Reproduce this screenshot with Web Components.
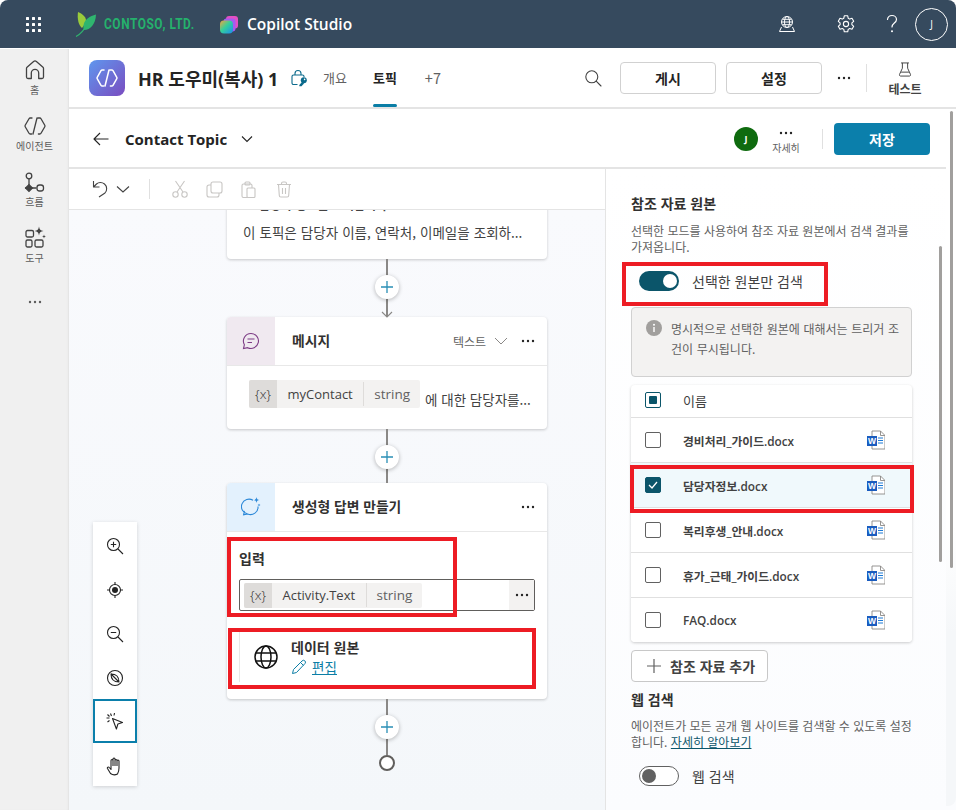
<!DOCTYPE html>
<html lang="ko"><head><meta charset="utf-8"><title>Copilot Studio</title>
<style>
html,body{margin:0;height:100%;overflow:hidden;background:#fff}
body{font-family:"Open Sans","Noto Sans CJK KR",sans-serif;color:#242424;font-size:14px}
</style></head><body>
<app-shell>
  <top-bar></top-bar>
  <side-nav></side-nav>
  <agent-header></agent-header>
  <topic-bar></topic-bar>
  <edit-toolbar></edit-toolbar>
  <flow-canvas></flow-canvas>
  <ref-panel></ref-panel>
  <page-rail></page-rail>
  <red-mark style="left:622px;top:262px;width:206px;height:44px"></red-mark>
  <red-mark style="left:630px;top:465px;width:284px;height:48px"></red-mark>
  <red-mark style="left:227px;top:537px;width:230px;height:80px"></red-mark>
  <red-mark style="left:228px;top:628px;width:308px;height:61px"></red-mark>
</app-shell>
<script>
const FONT='"Open Sans","Noto Sans CJK KR",sans-serif';
const KR='"Noto Sans CJK KR","Open Sans",sans-serif';
function def(name,css,html){
  customElements.define(name,class extends HTMLElement{
    constructor(){super();const s=this.attachShadow({mode:'open'});
      const h=typeof html==='function'?html(this):html;
      s.innerHTML='<style>'+css+'</style>'+h;}
  });
}
const ic=(w,h,vb,body,extra='')=>`<svg width="${w}" height="${h}" viewBox="${vb}" fill="none" ${extra}>${body}</svg>`;
const dots=(c='#242424')=>ic(16,4,'0 0 16 4',`<circle cx="3" cy="2" r="1.2" fill="${c}"/><circle cx="8" cy="2" r="1.2" fill="${c}"/><circle cx="13" cy="2" r="1.2" fill="${c}"/>`);
const agentPath=`<path d="M9 4H7.2a1.4 1.4 0 0 0-1.2.7L2.2 11.3a1.4 1.4 0 0 0 0 1.4L6 19.3a1.4 1.4 0 0 0 1.2.7H8.6M15 4h1.8a1.4 1.4 0 0 1 1.2.7l3.8 6.6a1.4 1.4 0 0 1 0 1.4L18 19.3a1.4 1.4 0 0 1-1.2.7H15.4M14 4l-4 16" stroke-linecap="round" stroke-linejoin="round"/>`;

def('app-shell',`:host{display:grid;position:relative;width:956px;height:810px;overflow:hidden;
  grid-template-columns:69px 537px 1fr;grid-template-rows:49px 60px 60px 41px 1fr;background:#fff}
  ::slotted(top-bar){grid-column:1/-1}
  ::slotted(side-nav){grid-row:2/-1}
  ::slotted(agent-header),::slotted(topic-bar){grid-column:2/-1}
  ::slotted(edit-toolbar){grid-column:2}
  ::slotted(flow-canvas){grid-column:2}
  ::slotted(ref-panel){grid-column:3;grid-row:4/-1}`,`<slot></slot>`);

def('red-mark',`:host{position:absolute;box-sizing:border-box;border:4px solid #ed1c24;pointer-events:none;display:block}`,'');

def('page-rail',`:host{position:absolute;left:946px;top:110px;width:10px;height:696px;background:linear-gradient(#fff 0,#fff 60%,#f5f7f9 75%,#f5f7f9);border-radius:0 0 8px 0;display:block}
  i{position:absolute;left:4px;top:1px;width:3px;height:457px;background:#a19f9d;border-radius:2px}`,`<i></i>`);

def('top-bar',`:host{display:flex;align-items:center;height:48px;background:#364a5e;color:#fff;border-radius:8px 8px 0 0;margin-bottom:1px;position:relative}
  svg{display:block}
  .waffle{margin-left:26px;display:grid;grid-template-columns:repeat(3,3px);gap:3px 3px;width:15px}
  .waffle i{width:3px;height:3px;background:#fff;border-radius:.5px}
  .leaf{margin-left:34px}
  .co{font:700 14.5px Roboto,sans-serif;color:#25b16c;margin-left:7px;letter-spacing:.7px;width:91px;white-space:nowrap;transform:scaleX(.82);transform-origin:left center}
  .cp{margin-left:25px;margin-top:1px}
  .st{margin-left:9px;font-size:15.5px;font-weight:600;white-space:nowrap}
  .r{margin-left:auto;display:flex;align-items:center}
  .av{width:31px;height:31px;border:1px solid #fff;border-radius:50%;display:flex;align-items:center;justify-content:center;font-size:10px;margin:0 8px 0 16px}`,
`<div class="waffle">${'<i></i>'.repeat(9)}</div>
 <span class="leaf">${ic(22,26,'0 0 22 26',`<path d="M3 1c4.500 2 7.500 4.500 8 8 .2 2-1.500 5-4 8C3.500 14 2 8 3 1Z" fill="#9acb3c"/><path d="M21 3.500C14.500 5 10 8.500 8.800 13c-.6 2.400-.5 4.500 0 6 7 0 11.700-6 12.200-15.500Z" fill="#2fb56f"/><path d="M1 25.500c4-2 8-6 11.500-13" stroke="#2fb56f" stroke-width="1.200"/>`)}</span>
 <span class="co">CONTOSO, LTD.</span>
 <span class="cp">${ic(18,18,'0 0 18 18',`<defs><linearGradient id="g1" x1="0" y1="0" x2="1" y2="1"><stop offset="0" stop-color="#f8a23c"/><stop offset=".45" stop-color="#35d09a"/><stop offset="1" stop-color="#1b8cf2"/></linearGradient></defs><rect x="6" y="0" width="12" height="12.500" rx="3" fill="#e24fc4"/><rect x="3.500" y="2.500" width="12" height="13" rx="3" fill="#a35cf0"/><rect x="0" y="4.500" width="13" height="13" rx="4" fill="url(#g1)"/>`)}</span>
 <span class="st">Copilot Studio</span>
 <div class="r">
  ${ic(18,18,'0 0 18 18',`<g stroke="#fff" stroke-width="1"><circle cx="9" cy="7" r="5.500"/><ellipse cx="9" cy="7" rx="2.500" ry="5.500"/><path d="M3.500 7h11M4.500 4.300h9M4.500 9.700h9M3.500 12 1.500 16.500h15L14.500 12"/></g>`)}
  <span style="width:41px"></span>
  ${ic(18,18,'1 1 18 18',`<g stroke="#fff" stroke-width="1.100" stroke-linejoin="round"><path d="M8.300 1.800h3.400l.5 2.400 1.500.9 2.300-.8 1.700 3-1.800 1.600v1.800l1.800 1.600-1.700 3-2.300-.8-1.500.9-.5 2.400H8.300l-.5-2.400-1.500-.9-2.300.8-1.700-3 1.800-1.600V8.900L2.300 7.300l1.700-3 2.300.8 1.500-.9Z"/><circle cx="10" cy="10" r="2.600"/></g>`)}
  <span style="width:30px"></span>
  ${ic(14,20,'0 0 14 20',`<path d="M2.500 5.500C2.800 3 4.800 1.500 7 1.500c2.500 0 4.500 1.700 4.500 4 0 3.500-4.500 3.700-4.500 7.500" stroke="#fff" stroke-width="1.200" stroke-linecap="round"/><circle cx="7" cy="17.300" r="1" fill="#fff"/>`)}
  <div class="av">J</div>
 </div>`);

def('nav-item',`:host{display:flex;flex-direction:column;align-items:center;justify-content:flex-start;height:56px;gap:1px;font-size:10px;color:#5c5c5c;font-family:${KR};line-height:14px;box-sizing:border-box}
  ::slotted(svg){display:block}`,`<slot name="i"></slot><slot></slot>`);
def('side-nav',`:host{display:block;background:#f0f0f0;box-shadow:inset -2px 0 2px -1px #e2e2e2;padding-top:9px;box-sizing:border-box}
  .more{display:flex;justify-content:center;padding-top:18px}`,
`<nav-item><svg slot="i" width="24" height="24" viewBox="0 0 24 24" fill="none" stroke="#424242" stroke-width="1.300" stroke-linejoin="round"><path d="M10.600 3.500a2.200 2.200 0 0 1 2.800 0L20 9.200a1.500 1.500 0 0 1 .5 1.100V19a1.500 1.500 0 0 1-1.500 1.500h-3.300V15a3.700 3.700 0 0 0-7.400 0v5.500H5A1.500 1.500 0 0 1 3.500 19v-8.700a1.500 1.500 0 0 1 .5-1.100Z"/></svg>홈</nav-item>
 <nav-item><svg slot="i" width="24" height="24" viewBox="0 0 24 24" fill="none" stroke="#424242" stroke-width="1.300">${agentPath}</svg>에이전트</nav-item>
 <nav-item><svg slot="i" width="24" height="24" viewBox="0 0 24 24" fill="none" stroke="#424242" stroke-width="1.300"><circle cx="6" cy="6" r="2.800"/><path d="M6 8.800V15M2 18h11.500"/><path d="M6 14.600l3.400 3.400L6 21.400 2.600 18Z" fill="#424242"/><rect x="14" y="15" width="6.500" height="6" rx="2.500"/></svg>흐름</nav-item>
 <nav-item><svg slot="i" width="24" height="24" viewBox="0 0 24 24" fill="none" stroke="#424242" stroke-width="1.300"><rect x="3" y="4.500" width="7.500" height="6.500" rx="1.500"/><rect x="3" y="14" width="6" height="7" rx="1.500"/><rect x="12" y="14" width="8" height="7" rx="1.500"/><path d="M16 .5c.5 3 1.500 4 4.500 4.500-3 .5-4 1.500-4.500 4.500-.5-3-1.500-4-4.500-4.500 3-.5 4-1.500 4.500-4.500ZM21 8.500c.2 1.300.7 1.800 2 2-1.300.2-1.800.7-2 2-.2-1.300-.7-1.800-2-2 1.300-.2 1.800-.7 2-2Z" fill="#424242" stroke="none"/></svg>도구</nav-item>
 <div class="more">${dots('#5c5c5c')}</div>`);

def('agent-header',`:host{display:flex;align-items:center;border-bottom:2px solid #e4e4e4;box-sizing:border-box;height:60px;padding-bottom:1px;font-family:${FONT}}
 .logo{margin-left:20px;width:36px;height:36px;border-radius:8px;background:linear-gradient(135deg,#5f97ee,#7a4cc0);display:flex;align-items:center;justify-content:center}
 .t{margin-left:13px;font:700 18px ${FONT};white-space:nowrap;width:141px}
 .lock{margin-left:11px;display:block}
 .tab{font-size:13px;color:#616161;position:relative;align-self:stretch;display:flex;align-items:center;font-family:${KR}}
 .tab.on{color:#242424;font-weight:700}
 .tab.on::after{content:"";position:absolute;left:0;right:0;bottom:-1px;height:3px;background:#0b7ea6;border-radius:2px}
 .btn{width:96px;height:32px;box-sizing:border-box;border:1px solid #d1d1d1;border-radius:4px;display:flex;align-items:center;justify-content:center;font:700 14px ${KR};background:#fff}
 .sep{width:1px;height:28px;background:#e0e0e0}
 .test{display:flex;flex-direction:column;align-items:center;width:44px;font:700 12px/16px ${KR};color:#424242;margin-left:16px;margin-top:4px;gap:4px}
 svg{display:block;flex:none}`,
`<div class="logo">${ic(24,24,'0 0 24 24',`<g stroke="#fff" stroke-width="1.500" fill="none">${agentPath}</g>`)}</div>
 <div class="t">HR 도우미(복사) 1</div>
 <span class="lock">${ic(18,18,'0 0 18 18',`<path d="M5 6V4.500a3 3 0 0 1 6 0V6M7.500 15.500h-4A1.500 1.500 0 0 1 2 14V7.500A1.500 1.500 0 0 1 3.500 6h9A1.500 1.500 0 0 1 14 7.500V8" stroke="#0b6a8c" stroke-width="1.100"/><circle cx="13.800" cy="11.200" r="3" fill="#0b6a8c"/><circle cx="14.600" cy="10.400" r=".8" fill="#fff"/><path d="M12.500 12.500 9.300 16v1.200h2.200L14 14.500" fill="#0b6a8c"/>`)}</span>
 <span class="tab" style="margin-left:15px">개요</span>
 <span class="tab on" style="margin-left:26px">토픽</span>
 <span class="tab" style="margin-left:28px;font-size:14.5px">+7</span>
 <span style="margin-left:143px">${ic(18,18,'0 0 18 18',`<circle cx="7.800" cy="7.800" r="6" stroke="#424242" stroke-width="1.100"/><path d="M12.200 12.200 17 17" stroke="#424242" stroke-width="1.100" stroke-linecap="round"/>`)}</span>
 <div class="btn" style="margin-left:18px">게시</div>
 <div class="btn" style="margin-left:10px">설정</div>
 <span style="margin-left:14px">${dots()}</span>
 <div class="sep" style="margin-left:14px"></div>
 <div class="test">${ic(14,15,'0 0 16 17',`<path d="M3.500 1h9M5 1v6L1.800 14a1.300 1.300 0 0 0 1.200 2h10a1.300 1.300 0 0 0 1.200-2L11 7V1M3.500 11.500h9" stroke="#424242" stroke-width="1.100"/>`)}<span>테스트</span></div>`);

def('topic-bar',`:host{display:flex;align-items:center;border-bottom:2px solid #e4e4e4;box-sizing:border-box;height:60px;padding-top:1px}
 .t{font:700 15px ${FONT};margin-left:16px;white-space:nowrap;width:103px}
 .av{width:24px;height:24px;border-radius:50%;background:#0f6b0f;color:#fff;font:700 9px ${FONT};display:flex;align-items:center;justify-content:center;margin-left:481px}
 .more{width:40px;margin-left:8px;display:flex;flex-direction:column;align-items:center;font:10px/14px ${KR};color:#616161;gap:6px;padding-top:8px}
 .sep{width:1px;height:20px;background:#e0e0e0;margin-left:16px}
 .save{width:96px;height:32px;margin-left:11px;background:#0b7fab;color:#fff;border-radius:4px;font:700 14px ${KR};display:flex;align-items:center;justify-content:center}
 svg{display:block;flex:none}`,
`<span style="margin-left:24px">${ic(16,16,'0 0 16 16',`<path d="M15.500 8H1M7 2 1 8l6 6" stroke="#242424" stroke-width="1.100" stroke-linejoin="round"/>`)}</span>
 <span class="t">Contact Topic</span>
 <span style="margin-left:13px">${ic(12,8,'0 0 12 8',`<path d="M1 1.500 6 6.500l5-5" stroke="#242424" stroke-width="1.100"/>`)}</span>
 <div class="av">J</div>
 <div class="more">${dots()}<span>자세히</span></div>
 <div class="sep"></div>
 <div class="save">저장</div>`);

const G='#c8c6c4';
def('edit-toolbar',`:host{display:flex;align-items:center;border-bottom:1px solid #e4e4e4;border-right:1px solid #e4e4e4;box-sizing:border-box;height:41px;background:#fff}
 svg{display:block;flex:none}.s{width:1px;height:20px;background:#e0e0e0;margin-left:19px}`,
`<span style="margin-left:23px">${ic(17,18,'0 0 17 18',`<path d="M1.500 1v6h6M1.500 7l3-3c2-1.800 5.500-2 8 0 2.800 2.500 2.800 6.500.5 9L7 17" stroke="#424242" stroke-width="1.100" stroke-linejoin="round"/>`)}</span>
 <span style="margin-left:7px">${ic(14,8,'0 0 14 8',`<path d="M1 1.500 7 7l6-5.500" stroke="#424242" stroke-width="1.100"/>`)}</span>
 <div class="s"></div>
 <span style="margin-left:22px">${ic(16,18,'0 0 16 18',`<path d="M3.500 1 11 12M12.500 1 5 12" stroke="${G}" stroke-width="1.100"/><circle cx="3.500" cy="14.500" r="2.700" stroke="${G}" stroke-width="1.100"/><circle cx="12.500" cy="14.500" r="2.700" stroke="${G}" stroke-width="1.100"/>`)}</span>
 <span style="margin-left:18px">${ic(17,17,'0 0 17 17',`<rect x="5" y="1" width="11" height="11" rx="2" stroke="${G}" stroke-width="1.100"/><path d="M5 4H3a2 2 0 0 0-2 2v8a2 2 0 0 0 2 2h8a2 2 0 0 0 2-2v-2" stroke="${G}" stroke-width="1.100"/>`)}</span>
 <span style="margin-left:18px">${ic(15,17,'0 0 15 17',`<rect x="1" y="3" width="10" height="13.500" rx="1.500" stroke="${G}" stroke-width="1.100"/><rect x="4" y="1" width="5" height="3" rx="1" stroke="${G}" stroke-width="1.100"/><rect x="6" y="7" width="8" height="9.500" rx="1" fill="#fff" stroke="${G}" stroke-width="1.100"/>`)}</span>
 <span style="margin-left:20px">${ic(16,17,'0 0 16 17',`<path d="M1 3.500h14M5.500 3.500V2.500A1.500 1.500 0 0 1 7 1h2a1.500 1.500 0 0 1 1.500 1.500v1M2.500 3.500l.8 11a1.500 1.500 0 0 0 1.500 1.500h6.400a1.500 1.500 0 0 0 1.500-1.500l.8-11M6.500 7v6M9.500 7v6" stroke="${G}" stroke-width="1.100"/>`)}</span>`);

def('var-pill',`:host{display:inline-flex;height:28px;background:#f3f2f1;border-radius:2px;font:13px/28px ${FONT};color:#424242;flex:none}
 .x{width:28px;background:#dedcda;border-radius:2px 0 0 2px;text-align:center;font-size:13.5px;font-weight:300;color:#323130}
 .n{padding:0 10.5px;border-right:1px solid #dedcda;height:24px;align-self:center;line-height:24px;white-space:nowrap}
 .t{padding:0 10px;color:#616161;white-space:nowrap;font-size:13.5px}`,
 el=>`<span class="x">{x}</span><span class="n">${el.getAttribute('name')}</span><span class="t">string</span>`);

def('add-link',`:host{display:flex;flex-direction:column;align-items:center;position:relative;height:var(--h,54px);width:100%;padding-top:16px;box-sizing:border-box;background:linear-gradient(#8a8886,#8a8886) center/2px 100% no-repeat}
 .b{width:24px;height:24px;border-radius:50%;background:#fff;box-shadow:0 1px 4px rgba(0,0,0,.28);display:flex;align-items:center;justify-content:center}
 svg{display:block}`,
 ()=>`<div class="b">${ic(14,14,'0 0 14 14',`<path d="M7 1v12M1 7h12" stroke="#2a8fb5" stroke-width="1.300"/>`)}</div><slot></slot>`);

def('flow-card',`:host{display:block;width:320px;background:#fff;border-radius:4px;box-shadow:0 1px 3px rgba(0,0,0,.2)}
 .h{display:flex;align-items:center;height:48px;border-bottom:1px solid #e8e8e8}
 .i{width:48px;height:48px;display:flex;align-items:center;justify-content:center;background:var(--ib);border-radius:4px 0 0 0}
 .t{margin:-2px 0 0 17px;font:700 13.8px ${KR};color:#323130}
 .r{margin-left:auto;display:flex;align-items:center;gap:12px;padding-right:11px;font:12px ${KR};color:#616161}
 ::slotted(svg){display:block}`,
 el=>`<div class="h"><div class="i"><slot name="icon"></slot></div><span class="t">${el.getAttribute('title')}</span><div class="r"><slot name="right"></slot>${dots()}</div></div><slot></slot>`);

def('zoom-rail',`:host{position:absolute;left:24px;top:312px;width:44px;height:264px;padding-top:2px;box-sizing:border-box;background:#fff;box-shadow:0 1px 4px rgba(0,0,0,.16);display:flex;flex-direction:column}
 div{height:44px;display:flex;align-items:center;justify-content:center;box-sizing:border-box;flex:none}
 .on{border:2px solid #0b7fab;height:44px;margin-top:-1px}
 .hd{height:43px;padding-top:3px}
 svg{display:block}`,
 ()=>{const s='stroke="#242424" stroke-width="1.100"';return `
 <div>${ic(18,18,'0 0 18 18',`<circle cx="7.500" cy="7.500" r="6" ${s}/><path d="M12 12l5 5M7.500 4.800v5.400M4.800 7.500h5.400" ${s}/>`)}</div>
 <div>${ic(18,18,'0 0 18 18',`<circle cx="9" cy="9" r="5.500" ${s}/><circle cx="9" cy="9" r="3" fill="#242424"/><path d="M9 1v2.500M9 14.500V17M1 9h2.500M14.500 9H17" ${s}/>`)}</div>
 <div>${ic(18,18,'0 0 18 18',`<circle cx="7.500" cy="7.500" r="6" ${s}/><path d="M12 12l5 5M4.800 7.500h5.400" ${s}/>`)}</div>
 <div>${ic(18,18,'0 0 18 18',`<circle cx="9" cy="9" r="7.500" ${s}/><path d="M5 5C10 5 13 8 13 13 8 13 5 10 5 5ZM5 5l8 8" ${s}/>`)}</div>
 <div class="on">${ic(18,18,'0 0 18 18',`<path d="M6.500 6.500l10 4-4.600 1.500-1.500 5Z" ${s} stroke-linejoin="round"/><path d="M4.500 1.500l1 2.500M.5 6h3M8.500 1l-.5 2.500M1.500 2.500 3.500 4.500M1.500 10l2-1.500" ${s}/>`)}</div>
 <div class="hd">${ic(18,20,'0 0 18 20',`<path d="M4.500 17.500 1.500 12.500c-.6-1.200 1-2 1.800-1l1.700 2V4.500a1 1 0 0 1 2 0V3a1 1 0 0 1 2 0v1.500a1 1 0 0 1 2 0V5a1 1 0 0 1 2 0v7c0 2-.3 4-1.500 6-2.500 1.300-5 1-7-.5ZM7 4v6M9 3v7M11 4.500V10M13 5v5.500" ${s} stroke-linejoin="round"/>`)}</div>`});

def('flow-canvas',`:host{display:block;position:relative;overflow:hidden;background:linear-gradient(#f9fafd,#f4f7fa);border-right:1px solid #e4e4e4;box-sizing:border-box}
 .col{width:320px;margin-left:158px;margin-top:-49px;display:flex;flex-direction:column}
 .card1{background:#fff;border-radius:4px;box-shadow:0 1px 3px rgba(0,0,0,.2);height:98px;overflow:hidden;box-sizing:border-box;padding-top:34px}
 .clip{height:20px;padding-left:32px;font:700 12px/20px ${KR};color:#424242;white-space:nowrap}
 .c1{padding:7px 16px 0;font:13.5px/20px ${KR};color:#424242;white-space:nowrap;word-spacing:.3px}
 .dt{padding:14px 14px 0 22px;font:13.5px ${KR};color:#424242;display:flex;height:63px;box-sizing:border-box;gap:5px}
 .dt span.txt{padding-top:9px;white-space:nowrap}
 .lb{font:700 14px/20px ${KR};color:#323130;padding:16px 12px 0}
 .inp{margin:11px 12px 0;height:32px;box-sizing:border-box;border:1px solid #605e5c;border-radius:2px;display:flex;align-items:center;padding-left:4px}
 .inp .m{margin-left:auto;width:25px;height:30px;background:#f3f2f1;display:flex;align-items:center;justify-content:center}
 .ds{margin:21px 12px 17px 12px;height:50px;display:flex;align-items:center;border-left:1px solid #e8e8e8}
 .ds .tx{margin-left:13px;display:flex;flex-direction:column;font:700 14px/20px ${KR};color:#323130;margin-top:-1px}
 .ds a{font:13.5px/20px ${KR};color:#0b7ea6;text-decoration:underline;display:flex;align-items:center;gap:5px}
 .ar{position:absolute;left:50%;margin-left:-6px;bottom:-1px}
 .end{width:16px;height:16px;border:2px solid #605e5c;border-radius:50%;box-sizing:border-box;align-self:center;background:#fff}
 svg{display:block}`,
`<div class="col">
 <div class="card1">
   <div class="clip">담당자 정보를 조회합니다</div>
   <div class="c1">이 토픽은 담당자 이름, 연락처, 이메일을 조회하...</div>
 </div>
 <add-link style="--h:58px"><svg class="ar" width="12" height="14" viewBox="0 0 12 14" fill="none"><path d="M1 8l5 5 5-5" stroke="#8a8886" stroke-width="1.100"/></svg></add-link>
 <flow-card title="메시지" style="--ib:#f0e9f0">
   <svg slot="icon" width="20" height="20" viewBox="0 0 20 20" fill="none" stroke="#7d3c85" stroke-width="1.100"><path d="M10 2.500a7.500 7.500 0 1 1-3.400 14.200L2.500 17.500l.9-3.800A7.500 7.500 0 0 1 10 2.500ZM6.500 8h7M6.500 11.500h4.500"/></svg>
   <span slot="right" style="display:flex;align-items:center;gap:8px">텍스트 <svg width="14" height="8" viewBox="0 0 14 8" fill="none"><path d="M1 1l6 6 6-6" stroke="#8a8886"/></svg></span>
   <div class="dt"><var-pill name="myContact"></var-pill><span class="txt">에 대한 담당자를...</span></div>
 </flow-card>
 <add-link></add-link>
 <flow-card title="생성형 답변 만들기" style="--ib:#e3f1fd">
   <svg slot="icon" width="20" height="20" viewBox="0 0 20 20" fill="none" stroke="#2b88d8" stroke-width="1.100"><path d="M12 3.300A7.500 7.500 0 1 0 6.600 17l-4 .8.800-4M17 9.500a7.500 7.500 0 0 1-10.400 7.500"/><path d="M15.500 0c.3 2 1 2.700 3 3-2 .3-2.700 1-3 3-.3-2-1-2.700-3-3 2-.3 2.700-1 3-3ZM18 6.500c.2 1 .6 1.400 1.500 1.500-1 .2-1.300.6-1.500 1.500-.2-1-.5-1.300-1.500-1.500 1-.1 1.300-.5 1.500-1.500Z" fill="#2b88d8" stroke="none"/></svg>
   <div class="lb">입력</div>
   <div class="inp"><var-pill name="Activity.Text" style="height:25px;line-height:25px"></var-pill><span class="m">${dots()}</span></div>
   <div class="ds">
     <span style="margin-left:14px">${ic(24,24,'0 0 24 24',`<g stroke="#111" stroke-width="1.500"><circle cx="12" cy="12" r="11"/><ellipse cx="12" cy="12" rx="5" ry="11"/><path d="M2 8h20M2 16h20"/></g>`)}</span>
     <div class="tx"><span>데이터 원본</span><a>${ic(16,16,'0 0 16 16',`<path d="M1.500 14.500l1-4L11 2a1.800 1.800 0 0 1 3 2.500L5.500 13.500ZM9.500 3.500l3 3" stroke="#0b7ea6" stroke-width="1"/>`)}<u>편집</u></a></div>
   </div>
 </flow-card>
 <add-link style="--h:56px"></add-link>
 <div class="end"></div>
</div>
<zoom-rail></zoom-rail>`);

def('toggle-sw',`:host{display:flex;align-items:center;margin-left:8px;font:14px ${KR};color:#424242;gap:13px}
 .s{width:40px;height:20px;border-radius:10px;box-sizing:border-box;display:flex;align-items:center;padding:0 2px;flex:none}
 .s.on{background:#0b556a;justify-content:flex-end}.s.off{border:1px solid #616161;background:#fff}
 .k{width:14px;height:14px;border-radius:50%}
 .on .k{background:#fff}.off .k{background:#616161}`,
 el=>`<div class="s ${el.hasAttribute('on')?'on':'off'}"><div class="k"></div></div><slot></slot>`);

const word=ic(18,20,'0 0 18 20',`<path d="M5 1h8.500L18 5.500V19H5Z" fill="#fff" stroke="#8a8886" stroke-width=".9"/><path d="M13.500 1v4.500H18" stroke="#8a8886" stroke-width=".9"/><path d="M11 8h5M11 10.500h5M11 13h5" stroke="#1d7ad6" stroke-width="1"/><rect x="0" y="6" width="10" height="10" fill="#1a5cbf"/><text x="5" y="14" font-family="Liberation Sans" font-size="8.500" font-weight="700" fill="#fff" text-anchor="middle">W</text>`);

def('file-row',`:host{display:flex;align-items:center;height:45px;box-sizing:border-box;border-top:1px solid #e0e0e0;padding-left:14px;font:600 11.8px ${FONT};color:#424242;background:var(--bg,#fff)}
 .c{width:16px;height:16px;box-sizing:border-box;border:1px solid #616161;border-radius:2px;flex:none;display:flex;align-items:center;justify-content:center}
 .c.on{background:#0b556a;border-color:#0b556a}
 .n{margin-left:22px;white-space:nowrap}
 .w{margin-left:auto;margin-right:27px;display:block}
 svg{display:block}`,
 el=>`<div class="c ${el.hasAttribute('checked')?'on':''}">${el.hasAttribute('checked')?ic(10,8,'0 0 10 8','<path d="M1 4l3 3 5-6" stroke="#fff" stroke-width="1.300"/>'):''}</div><span class="n">${el.getAttribute('name')}</span><span class="w">${word}</span>`);

def('ref-panel',`:host{display:block;position:relative;overflow:hidden;background:linear-gradient(#fff,#fbfcfe);padding:24px 0 0 25px;box-sizing:border-box;font:12px ${KR};color:#616161}
 h3{font:700 14px/20px ${KR};color:#323130;margin:0}
 p{margin:10px 0 0;width:281px;line-height:16px}
 .box{margin-top:16px;width:281px;height:70px;box-sizing:border-box;border:1px solid #d1d1d1;border-radius:4px;background:#f3f2f1;padding:11px 8px 0 14px;display:flex;line-height:20px;color:#616161}
 .box .t{margin-left:9px;word-spacing:.3px}
 .box svg{flex:none;margin-top:1px}
 .tb{margin-top:8px;width:281px;border-radius:4px;box-shadow:0 1px 3px rgba(0,0,0,.2);overflow:hidden;background:#fff}
 .th{display:flex;align-items:center;height:32px;padding-left:14px;color:#424242;font-size:13px;padding-bottom:2px;box-sizing:border-box}
 .th .c{width:16px;height:16px;box-sizing:border-box;border:1px solid #0b556a;border-radius:2px;display:flex;align-items:center;justify-content:center;margin-right:22px}
 .th .c i{width:8px;height:8px;background:#0b556a;border-radius:1px}
 .add{margin-top:8px;width:137px;height:32px;box-sizing:border-box;border:1px solid #c8c8c8;border-radius:4px;background:#fff;display:flex;align-items:center;font:700 14px ${KR};color:#424242;padding-left:14px;gap:8px;white-space:nowrap}
 .sb{position:absolute;width:3px;background:#a19f9d;border-radius:2px}
 a{color:#0b556a;text-decoration:underline;display:inline-block;line-height:16px}
 svg{display:block}`,
`<h3>참조 자료 원본</h3>
 <p>선택한 모드를 사용하여 참조 자료 원본에서 검색 결과를 가져옵니다.</p>
 <toggle-sw on style="margin-top:16px">선택한 원본만 검색</toggle-sw>
 <div class="box">${ic(16,16,'0 0 16 16','<circle cx="8" cy="8" r="8" fill="#a19f9d"/><circle cx="8" cy="4.800" r="1" fill="#fff"/><path d="M8 7v5" stroke="#fff" stroke-width="1.400"/>')}<span class="t">명시적으로 선택한 원본에 대해서는 트리거 조건이 무시됩니다.</span></div>
 <div class="tb">
  <div class="th"><div class="c"><i></i></div>이름</div>
  <file-row name="경비처리_가이드.docx"></file-row>
  <file-row checked name="담당자정보.docx" style="--bg:#f0f9fc"></file-row>
  <file-row name="복리후생_안내.docx"></file-row>
  <file-row name="휴가_근태_가이드.docx"></file-row>
  <file-row name="FAQ.docx"></file-row>
 </div>
 <div class="add">${ic(16,16,'0 0 16 16','<path d="M8 1v14M1 8h14" stroke="#616161" stroke-width="1.200"/>')}<span>참조 자료 추가</span></div>
 <h3 style="margin-top:7px">웹 검색</h3>
 <p style="margin-top:9px;width:284px">에이전트가 모든 공개 웹 사이트를 검색할 수 있도록 설정합니다. <a>자세히 알아보기</a></p>
 <toggle-sw style="margin-top:16px">웹 검색</toggle-sw>
 <div class="sb" style="left:333px;top:77px;height:316px"></div>`);
</script>
</body></html>
